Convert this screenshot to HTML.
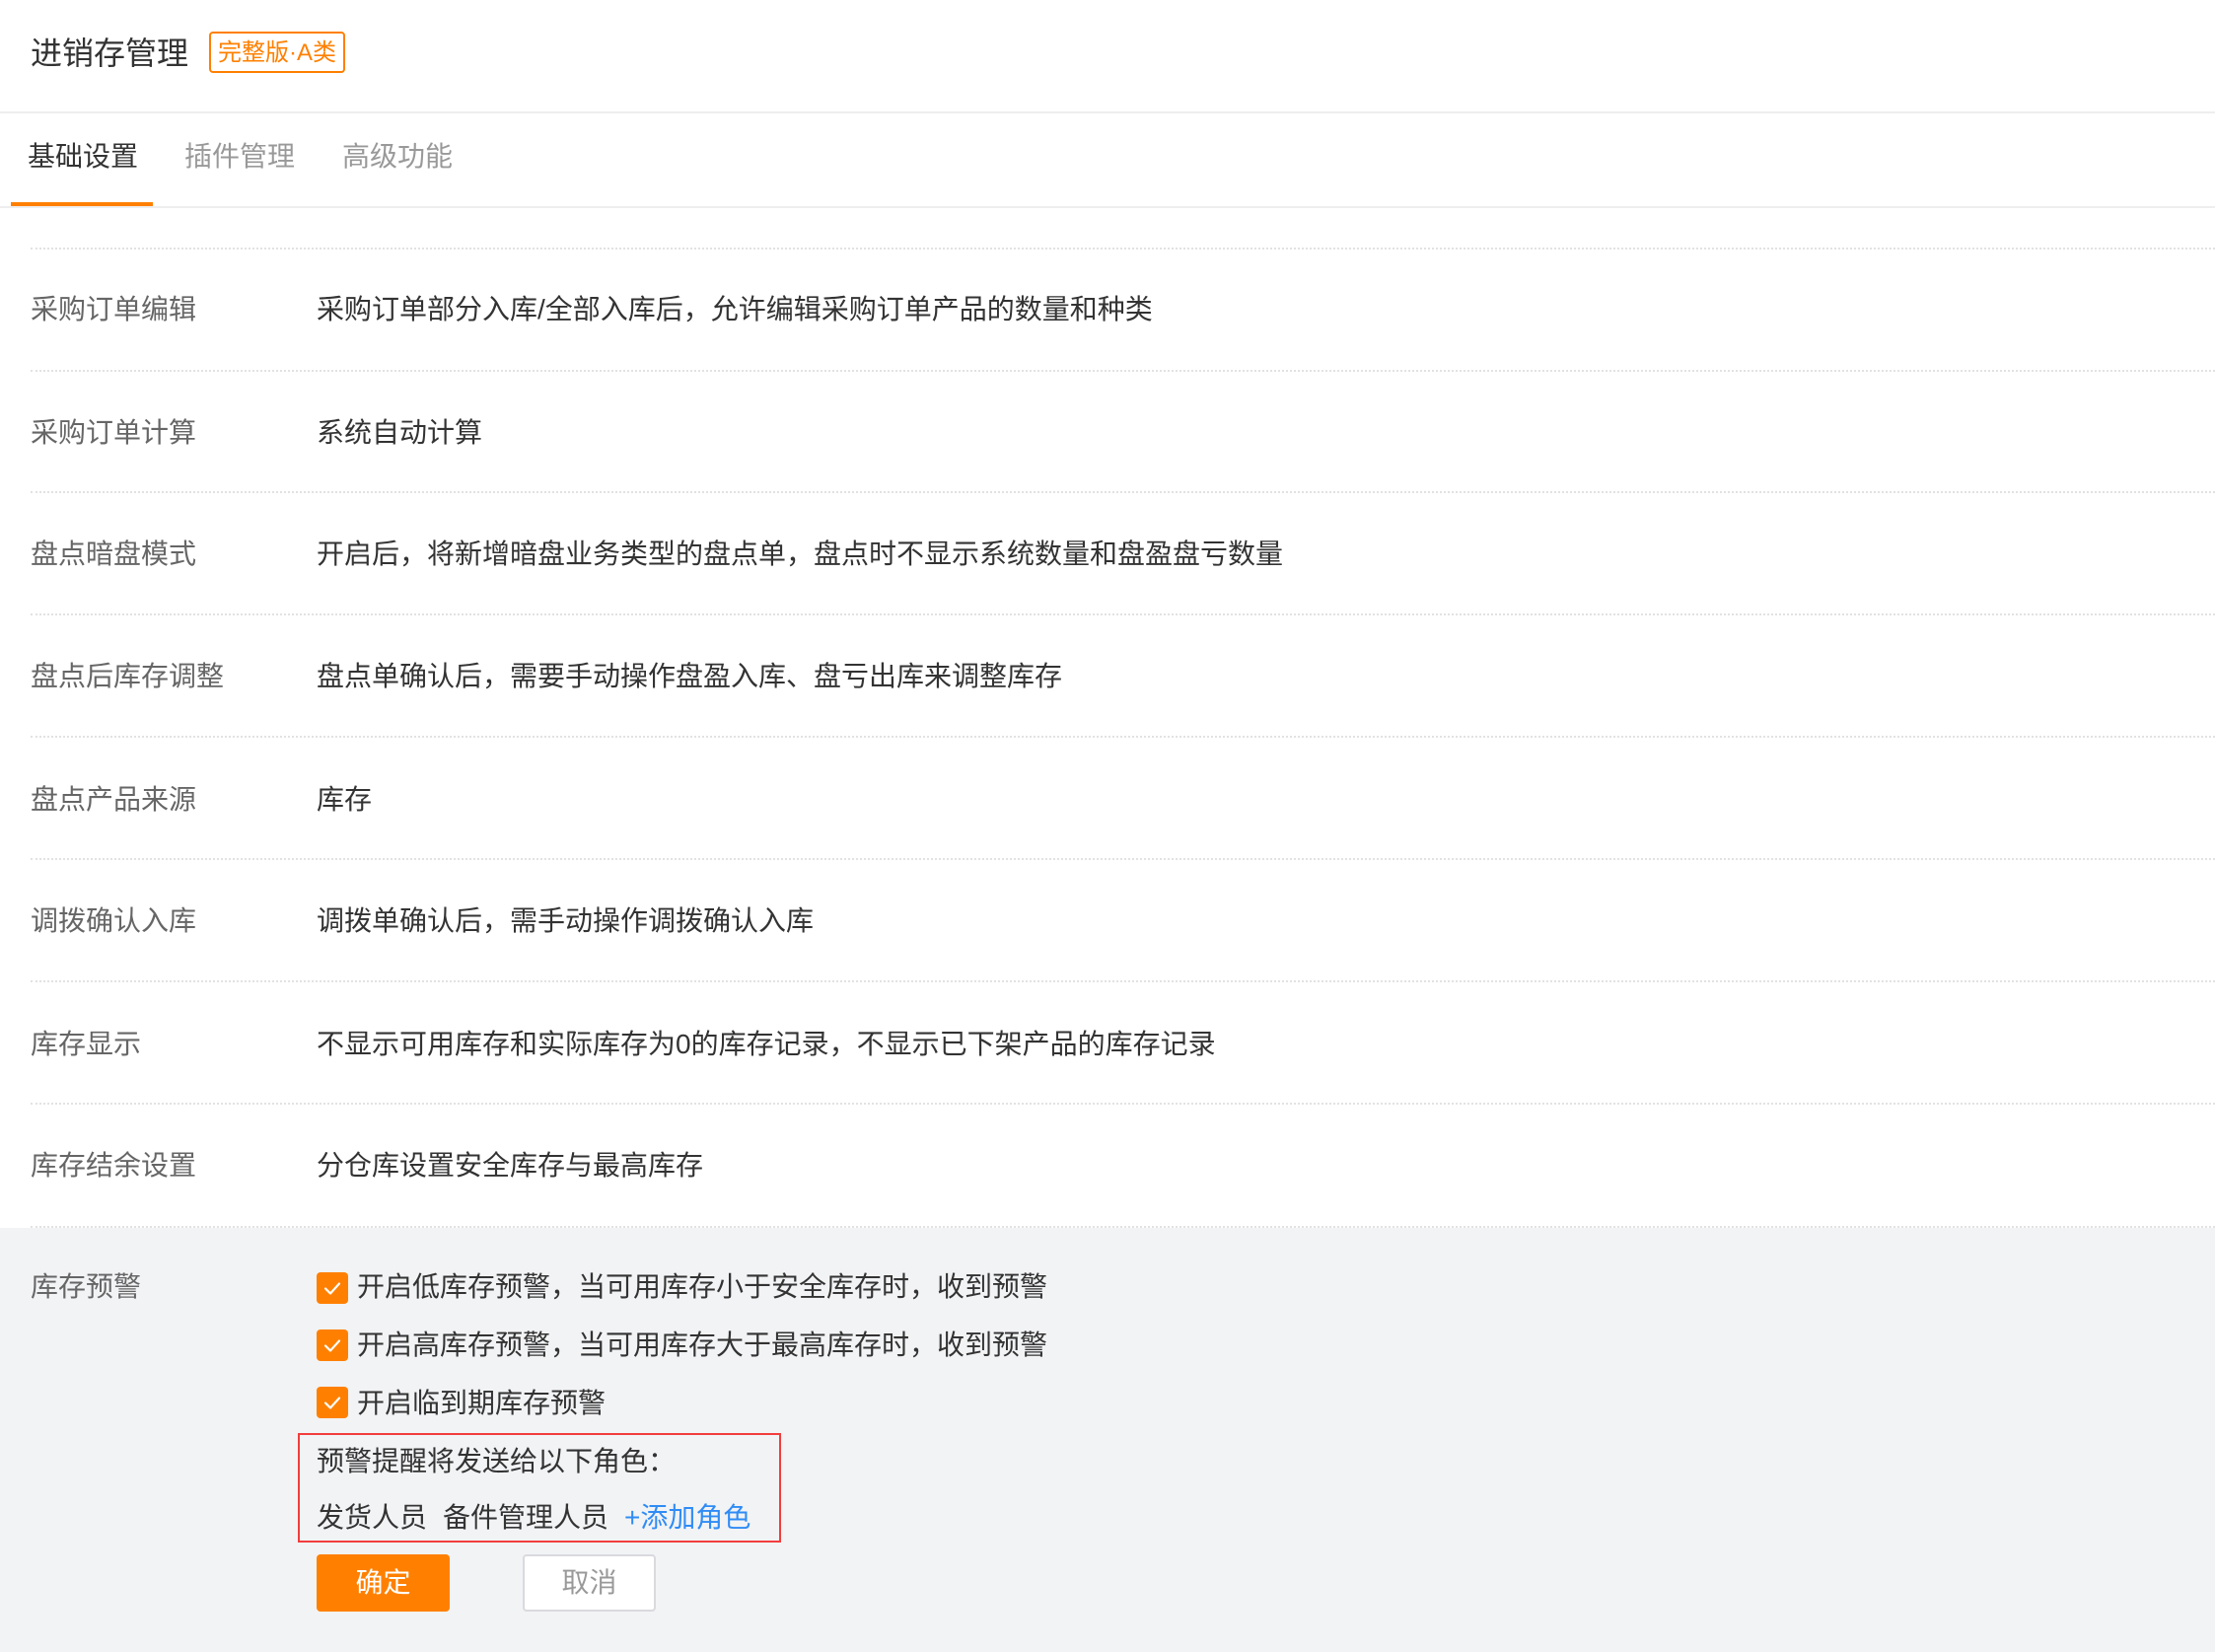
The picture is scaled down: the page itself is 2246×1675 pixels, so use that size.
<!DOCTYPE html>
<html><head><meta charset="utf-8">
<style>
*{margin:0;padding:0;box-sizing:border-box}
body{width:2246px;height:1675px;background:#fff;position:relative;overflow:hidden;font-family:"Liberation Sans","Noto Sans CJK SC",sans-serif;}
.a{position:absolute;white-space:nowrap;line-height:1}
.title{left:31px;top:38px;font-size:32px;color:#333}
.badge{left:212px;top:32px;width:138px;height:42px;border:2px solid #ff8000;border-radius:4px;color:#ff8000;font-size:24px;line-height:39px;text-align:center}
.hl{position:absolute;left:0;width:2246px;height:2px;background:#eeeeee}
.tab{top:145px;font-size:28px;color:#999}
.ul{position:absolute;left:11px;top:205px;width:144px;height:4px;background:#ff8000}
.dot{position:absolute;left:31px;right:0;height:0;border-top:2px dotted #e2e2e2}
.lab{left:31px;font-size:28px;color:#666}
.con{left:321px;font-size:28px;color:#333}
.gray{position:absolute;left:0;top:1245px;width:2246px;height:430px;background:#f2f3f5}
.cb{position:absolute;left:321px;width:32px;height:32px;background:#ff8000;border-radius:4px}
.cb svg{position:absolute;left:0;top:0}
.red{position:absolute;left:302px;top:1453px;width:490px;height:111px;border:2px solid #f23d3d}
.btn{position:absolute;top:1576px;height:58px;width:135px;border-radius:4px;font-size:28px;text-align:center;line-height:58px}
</style></head><body>
<div class="a title">进销存管理</div>
<div class="a badge">完整版·A类</div>
<div class="hl" style="top:113px"></div>
<div class="a tab" style="left:28px;color:#333">基础设置</div>
<div class="a tab" style="left:187px">插件管理</div>
<div class="a tab" style="left:347px">高级功能</div>
<div class="hl" style="top:209px"></div>
<div class="ul"></div>

<div class="dot" style="top:251px"></div>
<div class="a lab" style="top:300px">采购订单编辑</div>
<div class="a con" style="top:300px">采购订单部分入库/全部入库后，允许编辑采购订单产品的数量和种类</div>
<div class="dot" style="top:375px"></div>
<div class="a lab" style="top:425px">采购订单计算</div>
<div class="a con" style="top:425px">系统自动计算</div>
<div class="dot" style="top:498px"></div>
<div class="a lab" style="top:548px">盘点暗盘模式</div>
<div class="a con" style="top:548px">开启后，将新增暗盘业务类型的盘点单，盘点时不显示系统数量和盘盈盘亏数量</div>
<div class="dot" style="top:622px"></div>
<div class="a lab" style="top:672px">盘点后库存调整</div>
<div class="a con" style="top:672px">盘点单确认后，需要手动操作盘盈入库、盘亏出库来调整库存</div>
<div class="dot" style="top:746px"></div>
<div class="a lab" style="top:797px">盘点产品来源</div>
<div class="a con" style="top:797px">库存</div>
<div class="dot" style="top:870px"></div>
<div class="a lab" style="top:920px">调拨确认入库</div>
<div class="a con" style="top:920px">调拨单确认后，需手动操作调拨确认入库</div>
<div class="dot" style="top:994px"></div>
<div class="a lab" style="top:1045px">库存显示</div>
<div class="a con" style="top:1045px">不显示可用库存和实际库存为0的库存记录，不显示已下架产品的库存记录</div>
<div class="dot" style="top:1118px"></div>
<div class="a lab" style="top:1168px">库存结余设置</div>
<div class="a con" style="top:1168px">分仓库设置安全库存与最高库存</div>

<div class="gray"></div>
<div class="dot" style="top:1243px"></div>
<div class="a lab" style="top:1291px">库存预警</div>

<div class="cb" style="top:1290px"><svg width="32" height="32"><path d="M9 16.5l5 5 9-10" stroke="#fff" stroke-width="2.2" fill="none" stroke-linecap="round" stroke-linejoin="round"/></svg></div>
<div class="a con" style="left:362px;top:1291px">开启低库存预警，当可用库存小于安全库存时，收到预警</div>
<div class="cb" style="top:1348px"><svg width="32" height="32"><path d="M9 16.5l5 5 9-10" stroke="#fff" stroke-width="2.2" fill="none" stroke-linecap="round" stroke-linejoin="round"/></svg></div>
<div class="a con" style="left:362px;top:1350px">开启高库存预警，当可用库存大于最高库存时，收到预警</div>
<div class="cb" style="top:1406px"><svg width="32" height="32"><path d="M9 16.5l5 5 9-10" stroke="#fff" stroke-width="2.2" fill="none" stroke-linecap="round" stroke-linejoin="round"/></svg></div>
<div class="a con" style="left:362px;top:1409px">开启临到期库存预警</div>

<div class="red"></div>
<div class="a con" style="top:1468px">预警提醒将发送给以下角色：</div>
<div class="a con" style="top:1525px">发货人员</div>
<div class="a con" style="left:449px;top:1525px">备件管理人员</div>
<div class="a con" style="left:633px;top:1525px;color:#2f8cf5">+添加角色</div>

<div class="btn" style="left:321px;background:#ff8000;color:#fff">确定</div>
<div class="btn" style="left:530px;background:#fff;border:2px solid #d9d9de;color:#999;line-height:54px">取消</div>
</body></html>
